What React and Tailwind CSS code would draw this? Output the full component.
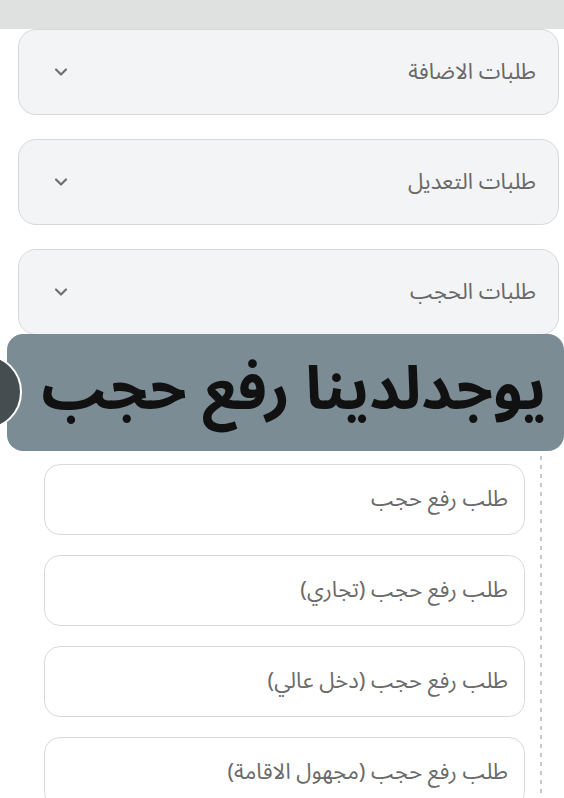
import React from 'react';
import { ChevronDown } from 'lucide-react';

const groups = ['طلبات الاضافة', 'طلبات التعديل', 'طلبات الحجب'];

const items = [
  'طلب رفع حجب',
  'طلب رفع حجب (تجاري)',
  'طلب رفع حجب (دخل عالي)',
  'طلب رفع حجب (مجهول الاقامة)',
];

const font = 'font-["Noto_Sans_Arabic","DejaVu_Sans",sans-serif]';

export default function App() {
  return (
    <div dir="rtl" className={`relative h-[798px] w-[564px] overflow-hidden bg-white ${font}`}>
      <div className="h-[29px] bg-[#dfe1e1]" />

      <div className="flex flex-col gap-[24px] pl-[18px] pr-[5px]">
        {groups.map((g) => (
          <div
            key={g}
            className="flex h-[86px] items-center justify-between rounded-[18px] border border-[#d6d8da] bg-[#f3f4f5] pl-[32px] pr-[22px]"
          >
            <span className="text-[22px] text-[#686868]">{g}</span>
            <ChevronDown className="h-[20px] w-[20px] text-[#6f6f6f]" strokeWidth={2.6} />
          </div>
        ))}
      </div>

      <div className="relative -mt-[1px] ml-[7px] flex h-[117px] items-center justify-start rounded-[16px] bg-[#7b8c95] pb-[6px] pr-[18px]">
        <span className="text-[60px] font-bold leading-none text-[#111]">يوجدلدينا رفع حجب</span>
      </div>

      <div className="absolute left-[-54px] top-[354px] h-[76px] w-[76px] rounded-full border-2 border-white bg-[#464d51]" />

      <div className="mt-[5px] flex gap-[15px] pr-[22px]">
        <div className="w-[2px] self-stretch bg-[repeating-linear-gradient(to_bottom,#c9c9c9_0,#c9c9c9_4px,transparent_4px,transparent_9px)]" />
        <div className="flex w-[481px] flex-col gap-[20px] pt-[8px]">
          {items.map((t) => (
            <div
              key={t}
              className="flex h-[71px] shrink-0 items-center rounded-[16px] border border-[#d9d9d9] bg-white pr-[16px]"
            >
              <span className="text-[22px] text-[#6a6a6a]">{t}</span>
            </div>
          ))}
        </div>
      </div>
    </div>
  );
}
